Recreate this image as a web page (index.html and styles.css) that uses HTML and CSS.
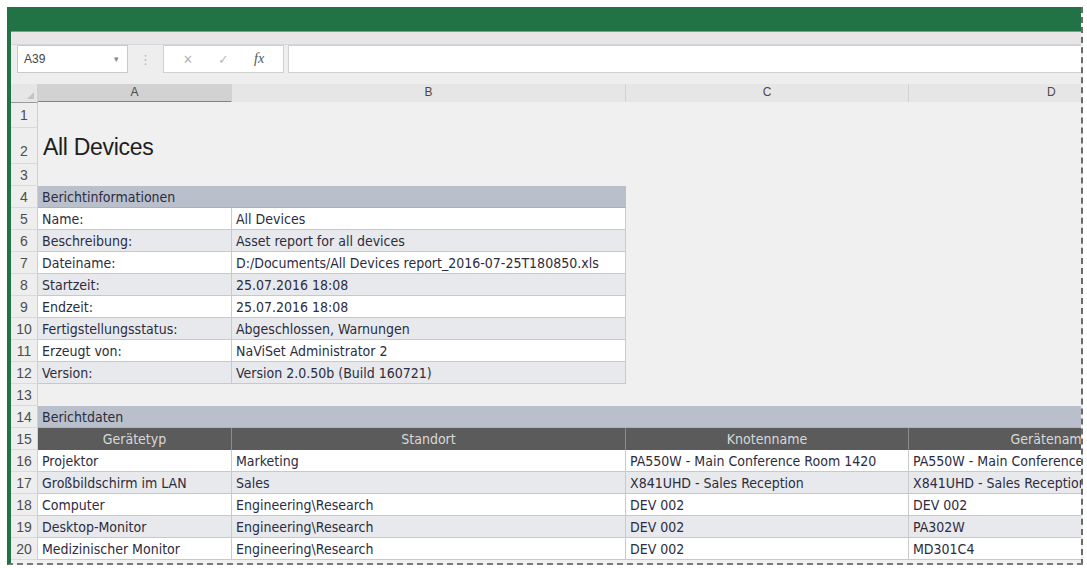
FILE: index.html
```html
<!DOCTYPE html>
<html lang="de">
<head>
<meta charset="utf-8">
<title>All Devices</title>
<link rel="stylesheet" href="styles.css">
</head>
<body>
<div class="window">
  <div class="titlebar"></div>
  <div class="ribbon-edge"></div>
  <div class="formula-bar">
    <div class="namebox"><span>A39</span><span class="caret">▾</span></div>
    <div class="dots">⋮</div>
    <div class="fbuttons">
      <span class="fb-x">✕</span>
      <span class="fb-ok">✓</span>
      <span class="fb-fx">fx</span>
    </div>
    <div class="finput"></div>
  </div>
  <div class="gap"></div>
  <div class="sheet">
    <div class="row colhead">
      <div class="corner"><span class="tri"></span></div>
      <div class="ch sel">A</div>
      <div class="ch">B</div>
      <div class="ch">C</div>
      <div class="ch">D</div>
    </div>
    <div class="row r1"><div class="rh">1</div><div class="c"></div><div class="c"></div><div class="c"></div><div class="c"></div></div>
    <div class="row r2"><div class="rh">2</div><div class="c title">All Devices</div><div class="c"></div><div class="c"></div><div class="c"></div></div>
    <div class="row"><div class="rh">3</div><div class="c"></div><div class="c"></div><div class="c"></div><div class="c"></div></div>
    <div class="row"><div class="rh">4</div><div class="c band span2">Berichtinformationen</div><div class="c"></div><div class="c"></div></div>
    <div class="row"><div class="rh">5</div><div class="c w">Name:</div><div class="c w">All Devices</div><div class="c"></div><div class="c"></div></div>
    <div class="row"><div class="rh">6</div><div class="c g">Beschreibung:</div><div class="c g">Asset report for all devices</div><div class="c"></div><div class="c"></div></div>
    <div class="row"><div class="rh">7</div><div class="c w">Dateiname:</div><div class="c w">D:/Documents/All Devices report_2016-07-25T180850.xls</div><div class="c"></div><div class="c"></div></div>
    <div class="row"><div class="rh">8</div><div class="c g">Startzeit:</div><div class="c g">25.07.2016 18:08</div><div class="c"></div><div class="c"></div></div>
    <div class="row"><div class="rh">9</div><div class="c w">Endzeit:</div><div class="c w">25.07.2016 18:08</div><div class="c"></div><div class="c"></div></div>
    <div class="row"><div class="rh">10</div><div class="c g">Fertigstellungsstatus:</div><div class="c g">Abgeschlossen, Warnungen</div><div class="c"></div><div class="c"></div></div>
    <div class="row"><div class="rh">11</div><div class="c w">Erzeugt von:</div><div class="c w">NaViSet Administrator 2</div><div class="c"></div><div class="c"></div></div>
    <div class="row"><div class="rh">12</div><div class="c g">Version:</div><div class="c g">Version 2.0.50b (Build 160721)</div><div class="c"></div><div class="c"></div></div>
    <div class="row"><div class="rh">13</div><div class="c"></div><div class="c"></div><div class="c"></div><div class="c"></div></div>
    <div class="row"><div class="rh">14</div><div class="c band span4">Berichtdaten</div></div>
    <div class="row"><div class="rh">15</div><div class="c hd">Gerätetyp</div><div class="c hd">Standort</div><div class="c hd">Knotenname</div><div class="c hd">Gerätename</div></div>
    <div class="row"><div class="rh">16</div><div class="c w">Projektor</div><div class="c w">Marketing</div><div class="c w">PA550W - Main Conference Room 1420</div><div class="c w">PA550W - Main Conference Room 1420</div></div>
    <div class="row"><div class="rh">17</div><div class="c g">Großbildschirm im LAN</div><div class="c g">Sales</div><div class="c g">X841UHD - Sales Reception</div><div class="c g">X841UHD - Sales Reception</div></div>
    <div class="row"><div class="rh">18</div><div class="c w">Computer</div><div class="c w">Engineering\Research</div><div class="c w">DEV 002</div><div class="c w">DEV 002</div></div>
    <div class="row"><div class="rh">19</div><div class="c g">Desktop-Monitor</div><div class="c g">Engineering\Research</div><div class="c g">DEV 002</div><div class="c g">PA302W</div></div>
    <div class="row"><div class="rh">20</div><div class="c w">Medizinischer Monitor</div><div class="c w">Engineering\Research</div><div class="c w">DEV 002</div><div class="c w">MD301C4</div></div>
  </div>
</div>
</body>
</html>
```
FILE: styles.css
```css
* { box-sizing: border-box; }
html, body { margin: 0; padding: 0; background: #ffffff; }
body { width: 1087px; height: 568px; overflow: hidden; font-family: "DejaVu Sans Condensed", "DejaVu Sans", sans-serif; }

.window {
  margin: 7px 0 0 7px;
  width: 1076px;
  height: 558px;
  border-left: 4px solid #217346;
  border-right: 2px dashed #6a6a6a;
  border-bottom: 2px dashed #7a7a7a;
  background: #f0f0f0;
  overflow: hidden;
}
.titlebar { height: 25px; background: #217346; border-bottom: 1px solid #5fae7f; }
.ribbon-edge { height: 13px; background: #e9e4e6; border-bottom: 1px solid #d3d6da; }
.formula-bar {
  height: 28px;
  display: flex;
  align-items: stretch;
  background: #eeeeee;
  padding-left: 6px;
}
.namebox {
  width: 111px;
  background: #fff;
  border: 1px solid #c9c9c9;
  display: flex;
  align-items: center;
  justify-content: space-between;
  padding: 0 8px 0 6px;
  font-family: "Liberation Sans", sans-serif;
  font-size: 12px;
  color: #444;
}
.caret { font-size: 9px; color: #888; }
.dots { width: 35px; display: flex; align-items: center; justify-content: center; color: #b0b0b0; font-size: 13px; }
.fbuttons {
  width: 121px;
  background: #fff;
  border: 1px solid #d0d0d0;
  display: flex;
  align-items: center;
  justify-content: space-around;
  padding: 0 6px;
  color: #b5b5b5;
  font-size: 13px;
}
.fb-fx { font-family: "Liberation Serif", serif; font-style: italic; color: #555; font-size: 14px; }
.finput { flex: 1; margin-left: 4px; background: #fff; border: 1px solid #d0d0d0; border-right: none; }
.gap { height: 11px; background: #eeeeee; }

.sheet { width: 1072px; overflow: hidden; }
.row {
  display: grid;
  grid-template-columns: 27px 194px 394px 283px 283px;
  height: 22px;
  width: 1181px;
}
.r1 { height: 26px; }
.r2 { height: 36px; }
.colhead { height: 18px; }
.corner { background: #e6e6e6; border-right: 1px solid #d0d0d0; border-bottom: 1px solid #9a9a9a; position: relative; }
.tri { position: absolute; right: 3px; bottom: 3px; width: 0; height: 0; border-left: 7px solid transparent; border-bottom: 7px solid #c4c4c4; }
.ch {
  background: #e6e6e6;
  border-right: 1px solid #d2d2d2;
  border-bottom: 1px solid #ababab;
  font-family: "Liberation Sans", sans-serif;
  font-size: 12px;
  color: #4a4a4a;
  text-align: center;
  line-height: 17px;
}
.ch.sel { background: #d2d2d2; border-bottom: 2px solid #7d877f; }
.ch:nth-child(5) { text-align: left; padding-left: 138px; }

.rh {
  background: #eeeeee;
  border-right: 1px solid #cfcfcf;
  border-bottom: 1px solid #dadada;
  font-family: "Liberation Sans", sans-serif;
  font-size: 14px;
  color: #4d4d4d;
  display: flex;
  align-items: center;
  justify-content: center;
}
.r2 .rh { align-items: flex-end; padding-bottom: 4px; }

.c {
  background: #f0f0f0;
  font-size: 14px;
  color: #2c2c3e;
  padding-left: 4px;
  white-space: nowrap;
  overflow: hidden;
  display: flex;
  align-items: center;
}
.title { font-family: "Liberation Sans", sans-serif; font-size: 23px; color: #1e1e1e; align-items: flex-end; padding-bottom: 3px; padding-left: 5px; letter-spacing: -0.3px; }
.band { background: #b9c0cc; border-bottom: 1px solid #a9b0bb; }
.span2 { grid-column: span 2; }
.span4 { grid-column: span 4; }
.w { background: #ffffff; border-right: 1px solid #cacaca; border-bottom: 1px solid #c8c8c8; }
.g { background: #e8e9ec; border-right: 1px solid #cacaca; border-bottom: 1px solid #c8c8c8; }
.hd { background: #5b5b5b; color: #d9d9d9; justify-content: center; padding-left: 0; border-right: 1px solid #8c8c8c; }
```
